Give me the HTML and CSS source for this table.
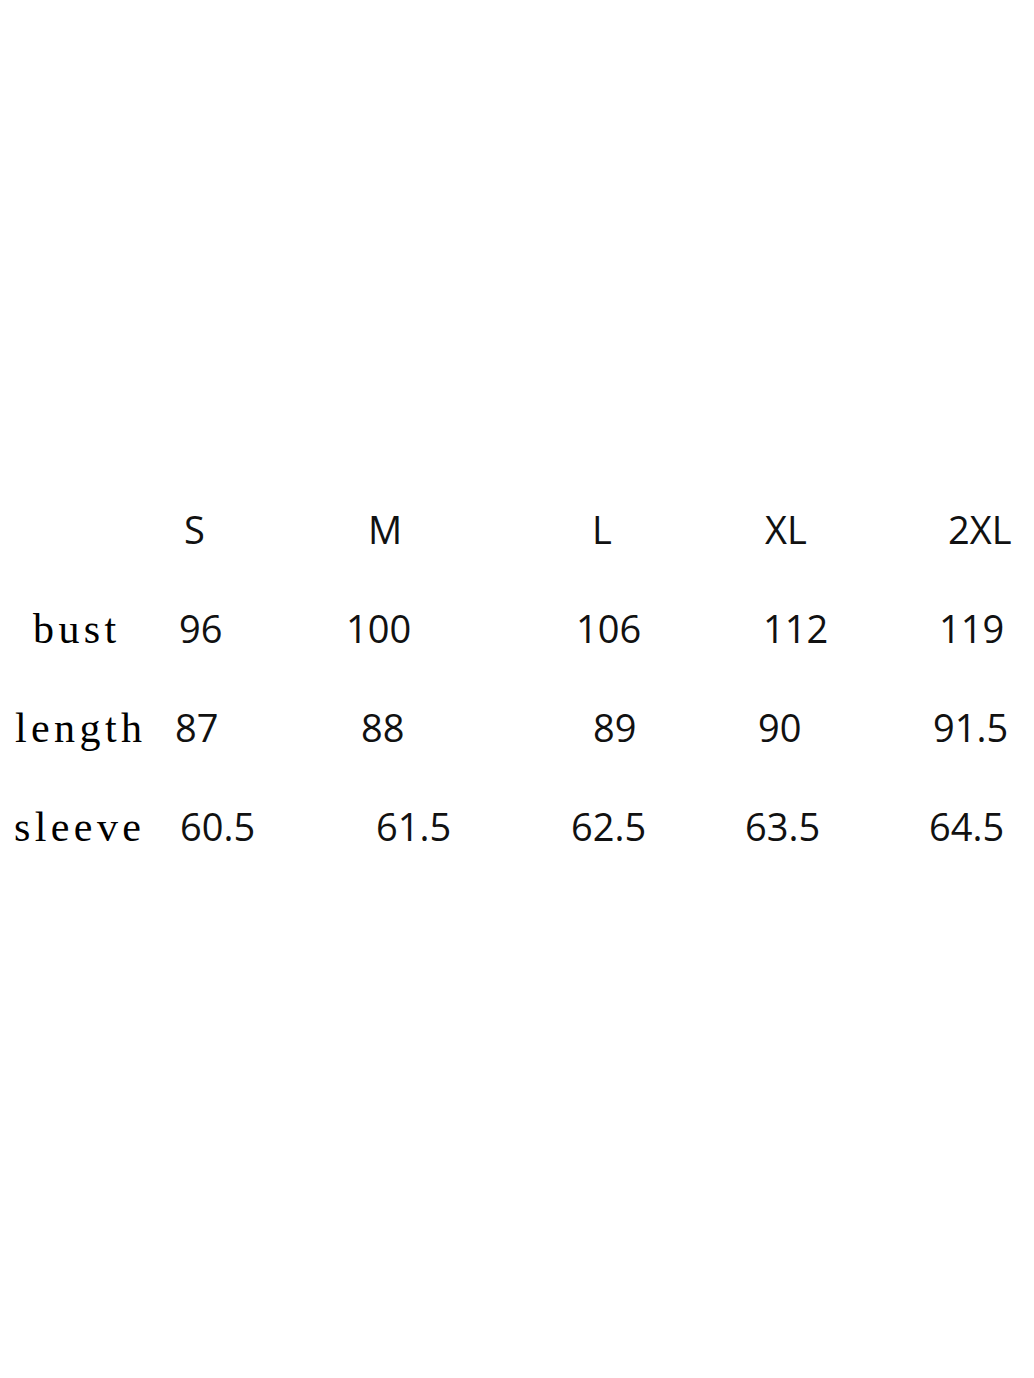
FILE: index.html
```html
<!DOCTYPE html>
<html lang="en">
<head>
<meta charset="utf-8">
<title>Size chart</title>
<link rel="stylesheet" href="styles.css">
</head>
<body>
<div class="chart">
  <div class="row r-head">
    <span class="label"></span>
    <span class="val">S</span>
    <span class="val">M</span>
    <span class="val">L</span>
    <span class="val">XL</span>
    <span class="val">2XL</span>
  </div>
  <div class="row r-bust">
    <span class="label">bust</span>
    <span class="val">96</span>
    <span class="val">100</span>
    <span class="val">106</span>
    <span class="val">112</span>
    <span class="val">119</span>
  </div>
  <div class="row r-length">
    <span class="label">length</span>
    <span class="val">87</span>
    <span class="val">88</span>
    <span class="val">89</span>
    <span class="val">90</span>
    <span class="val">91.5</span>
  </div>
  <div class="row r-sleeve">
    <span class="label">sleeve</span>
    <span class="val">60.5</span>
    <span class="val">61.5</span>
    <span class="val">62.5</span>
    <span class="val">63.5</span>
    <span class="val">64.5</span>
  </div>
</div>
</body>
</html>
```
FILE: styles.css
```css
html, body {
  margin: 0;
  padding: 0;
  background: #ffffff;
}
body {
  width: 1034px;
  height: 1378px;
  overflow: hidden;
  color: #000;
}
.chart {
  padding-top: 479px;
  display: flex;
  flex-direction: column;
}
.row {
  display: grid;
  height: 99px;
  line-height: 100px;
  align-items: baseline;
  white-space: nowrap;
}
.label {
  font-family: "Liberation Serif", "Times New Roman", serif;
  font-size: 42px;
  letter-spacing: 4.4px;
  color: #000;
}
.val {
  font-family: "Open Sans", "Noto Sans", sans-serif;
  font-size: 38px;
  color: #111;
}
.r-head {
  padding-left: 0;
  grid-template-columns: 184px 184px 224px 173px 183px auto;
}
.r-bust {
  padding-left: 33px;
  grid-template-columns: 146px 167px 230px 187px 176px auto;
}
.r-length {
  padding-left: 15px;
  grid-template-columns: 160px 186px 232px 165px 175px auto;
}
.r-sleeve {
  padding-left: 14px;
  grid-template-columns: 166px 196px 195px 174px 184px auto;
}
```
